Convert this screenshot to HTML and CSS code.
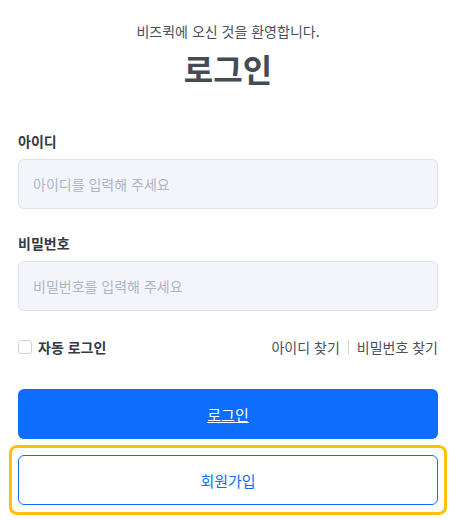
FILE: index.html
```html
<!DOCTYPE html>
<html lang="ko">
<head>
  <meta charset="UTF-8">
  <meta name="viewport" content="width=device-width, initial-scale=1.0">
  <title>로그인</title>
  <link rel="stylesheet" href="styles.css">
</head>
<body>
<div class="login-box">
  <p class="welcome">비즈퀵에 오신 것을 환영합니다.</p>
  <h1 class="title">로그인</h1>

  <div class="field">
    <label class="field-label" for="userid">아이디</label>
    <input class="field-input" id="userid" type="text" placeholder="아이디를 입력해 주세요">
  </div>
  <div class="field">
    <label class="field-label" for="userpw">비밀번호</label>
    <input class="field-input" id="userpw" type="password" placeholder="비밀번호를 입력해 주세요">
  </div>

  <div class="options">
    <label class="auto-login"><span class="check"></span>자동 로그인</label>
    <div class="find-links">
      <a href="#">아이디 찾기</a>
      <span class="divider"></span>
      <a href="#">비밀번호 찾기</a>
    </div>
  </div>

  <a class="btn btn-primary" href="#">로그인</a>
  <div class="focus-ring">
    <a class="btn btn-outline" href="#">회원가입</a>
  </div>
</div>
</body>
</html>
```

FILE: styles.css
```css
body{margin:0; background:#fff; font-family:"Noto Sans CJK KR","Noto Sans",sans-serif; color:#343a40;}
.login-box{width:420px; margin-left:18px; padding-top:21px;}
.welcome{margin:0; text-align:center; font-size:14px; line-height:20px; color:#495057;}
.title{margin:7px 0 43px; text-align:center; font-size:32px; line-height:40px; font-weight:700; color:#454b53;}

.field{margin-bottom:24px;}
.field-label{display:block; font-size:14px; line-height:20px; font-weight:700; color:#343a40; margin-bottom:8px;}
.field-input{
  box-sizing:border-box;
  display:block;
  width:100%;
  height:50px;
  padding:0 14px;
  border:1px solid #dde2ec;
  border-radius:6px;
  background:#f3f5fa;
  font-family:inherit;
  font-size:14px;
  color:#343a40;
  outline:none;
}
.field-input::placeholder{color:#adb5c3;}

.options{display:flex; justify-content:space-between; align-items:center; height:20px; margin-top:26px; margin-bottom:32px;}
.auto-login{display:flex; align-items:center; font-size:14px; font-weight:700; color:#343a40;}
.check{box-sizing:border-box; width:14px; height:14px; border:1px solid #ced4da; border-radius:3px; background:#fff; margin-right:6px;}
.find-links{display:flex; align-items:center; font-size:14px;}
.find-links a{color:#495057; text-decoration:none;}
.divider{width:1px; height:14px; background:#ced4da; margin:0 8px;}

.btn{
  box-sizing:border-box;
  display:flex;
  align-items:center;
  justify-content:center;
  width:100%;
  height:50px;
  border-radius:6px;
  font-size:15px;
}
.btn-primary{background:#0d6efd; color:#fff; text-decoration:underline;}
.btn-outline{background:#fff; border:1px solid #0d6efd; color:#0d6efd; text-decoration:none;}
.focus-ring{margin:6px -9px 0; padding:7px 6px; border:3px solid #ffc107; border-radius:8px;}
```
